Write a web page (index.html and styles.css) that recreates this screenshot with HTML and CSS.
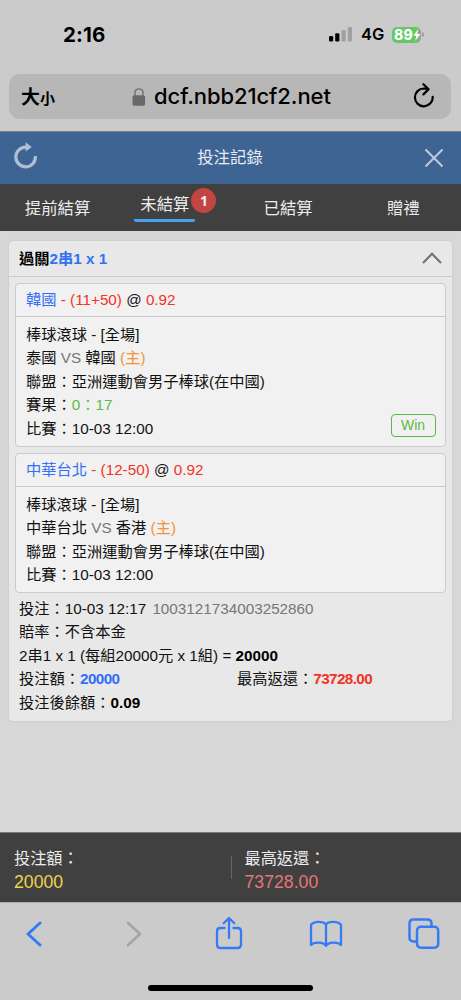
FILE: index.html
```html
<!DOCTYPE html>
<html lang="zh-Hant">
<head>
<meta charset="utf-8">
<meta name="viewport" content="width=device-width">
<title>投注記錄</title>
<link rel="stylesheet" href="styles.css">
</head>
<body>
<div class="phone">
  <header class="status">
    <span class="clock">2:16</span>
    <div class="indicators">
      <svg class="signal" width="24" height="16" viewBox="0 0 24 16"><rect x="0" y="9" width="4.2" height="5.5" rx="1.2"/><rect x="6.2" y="6.2" width="4.2" height="8.3" rx="1.2"/><g fill="#a0a0a0"><rect x="12.5" y="3" width="4.2" height="11.5" rx="1.2"/><rect x="18.8" y="0" width="4.2" height="14.5" rx="1.2"/></g></svg>
      <span class="network">4G</span>
      <span class="battery"><span class="level">89</span>
        <svg class="bolt" width="8" height="12" viewBox="0 0 8 12"><path d="M5.2 0 .4 6.7h2.9L2.2 12 7.3 5.1H4.2z" fill="#fff"/></svg>
      </span>
      <span class="battery-tip"></span>
    </div>
  </header>
  <div class="address">
    <span class="text-size">大<small>小</small></span>
    <div class="site">
      <svg class="lock" width="14" height="18" viewBox="0 0 14 18"><path d="M3 8V4.8C3 2.5 4.7 1 7 1s4 1.500 4 3.800V8" fill="none" stroke="#77777a" stroke-width="1.600"/><rect x=".5" y="7.300" width="12.600" height="10.500" rx="1.800" fill="#69696d"/></svg>
      <span class="url">dcf.nbb21cf2.net</span>
    </div>
    <svg class="reload" width="22" height="26" viewBox="0 0 22 26" fill="none" stroke="#000" stroke-width="2.200" stroke-linecap="round" stroke-linejoin="round"><path d="M19.700 13.800A8.900 8.900 0 1 1 10.900 5.500L15.500 6.100M10.400 1.200 15.600 6.200 10.400 11.400"/></svg>
  </div>
  <div class="title-bar">
    <svg class="refresh" width="26" height="28" viewBox="0 0 26 28"><path d="M22.400 14.200A9.800 9.800 0 1 1 12.500 5.200h2" fill="none" stroke="#afc0d6" stroke-width="3.200"/><path d="M12.600.3 18.800 5 12.600 9.500z" fill="#afc0d6"/></svg>
    <h1>投注記錄</h1>
    <svg class="close" width="20" height="20" viewBox="0 0 20 20"><path d="m1.500 1.500 17 17m0-17-17 17" fill="none" stroke="#bdcadb" stroke-width="2.100"/></svg>
  </div>
  <nav class="tabs">
    <span class="tab">提前結算</span>
    <span class="tab active"><span class="tab-label">未結算</span><b class="badge">1</b></span>
    <span class="tab">已結算</span>
    <span class="tab">贈禮</span>
  </nav>
  <main>
    <section class="panel">
      <div class="panel-head"><strong>過關<span class="blue">2串1 x 1</span></strong>
        <svg width="20" height="12" viewBox="0 0 20 12"><path d="m1 11 9-9.300L19 11" fill="none" stroke="#707070" stroke-width="2"/></svg>
      </div>
      <div class="panel-body">
        <article class="bet">
          <h2><span class="blue">韓國</span> <span class="red">- (11+50)</span> @ <span class="red">0.92</span></h2>
          <div class="details">
            <p>棒球滾球 - [全場]</p>
            <p>泰國 <span class="gray">VS</span> 韓國 <span class="orange">(主)</span></p>
            <p>聯盟：亞洲運動會男子棒球(在中國)</p>
            <p>賽果：<span class="green">0：17</span></p>
            <p>比賽：10-03 12:00</p>
            <span class="win">Win</span>
          </div>
        </article>
        <article class="bet">
          <h2><span class="blue">中華台北</span> <span class="red">- (12-50)</span> @ <span class="red">0.92</span></h2>
          <div class="details">
            <p>棒球滾球 - [全場]</p>
            <p>中華台北 <span class="gray">VS</span> 香港 <span class="orange">(主)</span></p>
            <p>聯盟：亞洲運動會男子棒球(在中國)</p>
            <p>比賽：10-03 12:00</p>
          </div>
        </article>
        <div class="summary">
          <p>投注：10-03 12:17 <span class="ticket">1003121734003252860</span></p>
          <p>賠率：不含本金</p>
          <p>2串1 x 1 (每組20000元 x 1組) = <b>20000</b></p>
          <p class="split"><span>投注額：<b class="blue">20000</b></span><span>最高返還：<b class="red">73728.00</b></span></p>
          <p>投注後餘額：<b>0.09</b></p>
        </div>
      </div>
    </section>
  </main>
  <footer class="totals">
    <div><span>投注額：</span><span class="amount yellow">20000</span></div>
    <div class="return"><span>最高返還：</span><span class="amount pink">73728.00</span></div>
  </footer>
  <div class="browser-bar">
    <div class="toolbar">
      <span class="tool"><svg width="16" height="26" viewBox="0 0 16 26"><path d="M14 2 2 13l12 11" stroke-width="3"/></svg></span>
      <span class="tool disabled"><svg width="16" height="26" viewBox="0 0 16 26"><path d="m2 2 12 11L2 24" stroke-width="2.600"/></svg></span>
      <span class="tool share"><svg width="28" height="34" viewBox="0 0 28 34"><path d="M9.500 12H5.500C3.300 12 2 13.200 2 15.300v13.400C2 30.800 3.300 32 5.500 32h17c2.200 0 3.500-1.200 3.500-3.300V15.300c0-2.100-1.300-3.300-3.500-3.300h-4M14 22V2.200M8.700 7.200 14 2l5.300 5.200" stroke-width="2.300"/></svg></span>
      <span class="tool"><svg width="34" height="28" viewBox="0 0 34 28"><path d="M17 4.500C14.600 1 4.800.7 2 5v20c2.800-3.400 12.500-3.300 15 .8 2.500-4.100 12.200-4.200 15-.8V5c-2.800-4.300-12.600-4-15-.5zM17 4.500V25" stroke-width="2.300"/></svg></span>
      <span class="tool"><svg width="32" height="32" viewBox="0 0 32 32"><path d="M8.500 23.500h-3c-2.500 0-4-1.400-4-3.900V5.500c0-2.500 1.500-4 4-4h14c2.400 0 3.900 1.400 4 3.900v3.200" stroke-width="2.500"/><rect x="9" y="8.800" width="21.200" height="21" rx="3.700" stroke-width="2.500"/></svg></span>
    </div>
    <div class="home-indicator"></div>
  </div>
</div>
</body>
</html>
```
FILE: styles.css
```css
* { box-sizing: border-box; }
body { margin: 0; background: #cbcbcb; color: #111; font: 15.25px/23.5px "Liberation Sans", "Noto Sans CJK TC", sans-serif; }
svg { display: block; flex: none; }
h1, h2, p { margin: 0; font-size: inherit; font-weight: 400; }
.phone { display: flex; flex-direction: column; width: 461px; height: 1000px; overflow: hidden; }
.status { display: flex; justify-content: space-between; align-items: center; height: 74px; padding: 0 37px 5px 63px; color: #000; font-family: Inter, sans-serif; }
.clock { font-size: 20.5px; font-weight: 700; letter-spacing: .1px; }
.indicators { display: flex; align-items: center; }
.network { width: 31px; margin-left: 8px; font-size: 16.5px; font-weight: 600; }
.battery { display: flex; align-items: center; width: 29px; height: 16px; padding-left: 2px; border-radius: 5px; background: linear-gradient(90deg, #62c966 89%, #a0a0a0 89%); color: #fff; }
.level { width: 20px; font-size: 14px; font-weight: 800; line-height: 16px; letter-spacing: .2px; }
.battery-tip { width: 2px; height: 5px; margin-left: 1px; border-radius: 0 2px 2px 0; background: #a0a0a0; }
.address { display: flex; align-items: center; height: 45px; margin: 0 10px 0 9px; padding: 0 16px 0 12px; border-radius: 11px; background: #b7b7b7; color: #000; }
.text-size { width: 111px; font: 700 19px/45px "Noto Sans CJK TC", sans-serif; }
.text-size small { font-size: 15px; }
.site { display: flex; align-items: center; gap: 8px; }
.url { width: 178px; font: 500 22px/45px Inter, sans-serif; letter-spacing: -.08px; white-space: nowrap; }
.reload { margin: 0 0 2px auto; }
.title-bar { display: flex; justify-content: space-between; align-items: center; height: 53px; margin-top: 12px; padding: 0 17px 0 13px; border-top: 1px solid #718093; background: #3e6493; color: #e8edf3; }
.title-bar h1 { margin-left: -3px; font-size: 16.4px; }
.refresh { margin-bottom: 4px; }
.tabs { display: grid; grid-template-columns: repeat(4, 1fr); height: 47px; background: #404040; color: #ededed; font-size: 16.4px; }
.tab { display: flex; justify-content: center; align-items: center; padding-top: 2px; }
.tab.active { align-items: flex-start; justify-content: flex-start; padding: 4px 0 0 19px; }
.tab-label { height: 34px; padding: 5px 6px 0; border-bottom: 3px solid #48a4ef; border-radius: 2px; }
.badge { width: 25px; height: 25px; margin-left: -4px; border-radius: 50%; background: #c34541; color: #eee; font: 700 14px/25px "Noto Sans", sans-serif; text-align: center; }
main { flex: 1; padding: 9.5px 9.5px 0 9px; background: #d7d7d7; }
.panel { height: 480px; border-radius: 4px; background: #e8e8e8; box-shadow: 0 0 2px #bbb; }
.panel-head { display: flex; align-items: center; justify-content: space-between; height: 36px; padding: 0 10px; border-bottom: 1px solid #cbcbcb; }
.panel-head strong { padding-top: 1px; color: #000; }
.panel-body { padding: 6px 6px 0; }
.bet { margin-bottom: 6px; border: 1px solid #cbcbcb; border-radius: 4px; background: #f1f1f1; }
.bet h2 { height: 33px; padding: 0 10px; border-bottom: 1px solid #cbcbcb; line-height: 32px; }
.details { position: relative; padding: 6px 10px 5.5px; }
.win { position: absolute; right: 9px; bottom: 9px; width: 45px; height: 23px; border: 1px solid #5bb947; border-radius: 4px; color: #5bb947; font-size: 14px; line-height: 20px; text-align: center; }
.summary { padding: 0 4px; margin-top: -2.5px; }
.ticket { margin-left: 2px; color: #777; }
.split { display: grid; grid-template-columns: 218px 1fr; }
.blue { color: #3370f5; }
.red { color: #f03427; }
.green { color: #5bb947; }
.orange { color: #f29335; }
.gray { color: #777; }
b { color: #000; }
.split b { letter-spacing: -.6px; }
b.blue { color: #3370f5; }
b.red { color: #f03427; }
.totals { display: grid; grid-template-columns: 1fr 1fr; align-items: center; height: 70px; border-top: 1px solid #777; background: #404040; color: #ededed; font-size: 16.2px; line-height: 24px; }
.totals div { display: flex; flex-direction: column; padding: 4px 14px 0; }
.totals .return { position: relative; }
.return::before { content: ""; position: absolute; left: 0; top: 14px; width: 1px; height: 23px; background: #666; }
.amount { font-size: 17.7px; }
.yellow { color: #edd44b; }
.pink { color: #e47775; }
.browser-bar { display: flex; flex-direction: column; align-items: center; justify-content: space-between; height: 98px; padding: 14px 20.5px 9px 16.5px; border-top: 1px solid #aaa; }
.toolbar { display: flex; justify-content: space-between; width: 100%; height: 34px; fill: none; stroke: #347bf5; stroke-linecap: round; stroke-linejoin: round; }
.tool { display: flex; align-items: center; justify-content: center; width: 34px; height: 34px; }
.disabled { padding-left: 6px; stroke: #a4a4a4; }
.share { padding: 0 0 3px 1px; }
.home-indicator { width: 165px; height: 6px; margin-left: 4px; border-radius: 3px; background: #000; }
```
